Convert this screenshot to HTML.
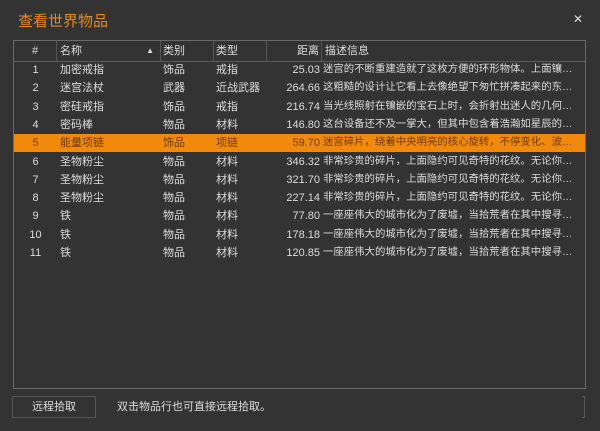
<!DOCTYPE html>
<html><head><meta charset="utf-8"><style>
body{margin:0;width:600px;height:431px;background:#333;font-family:"Liberation Sans","Noto Sans CJK SC",sans-serif;color:#ddd;font-size:11px;overflow:hidden;position:relative}
.title{position:absolute;left:18px;top:10px;font-size:15px;color:#e8891b}
.x{position:absolute;left:573px;top:12px;font-size:12px;color:#ddd}
.tbl{position:absolute;left:13px;top:40px;width:573px;height:349px;border:1px solid #6a6a6a;box-sizing:border-box}
.hdr{position:absolute;left:0;top:0;width:100%;height:20px;border-bottom:1px solid #5a5a5a;background:#333}
.c{position:absolute;white-space:nowrap;overflow:hidden;line-height:18px}
.hdr .c{line-height:20px;border-right:1px solid #555;height:20px;box-sizing:border-box}
.row{position:absolute;left:0;width:100%;height:18.3px}
.sel{background:#f0890c;color:#6b3a00}
.d{font-size:10.4px;text-overflow:ellipsis}
.btn{position:absolute;left:12px;top:396px;width:84px;height:22px;border:1px solid #555;box-sizing:border-box;text-align:center;line-height:20px}
.msg{position:absolute;left:117px;top:396px;line-height:22px}
.br{position:absolute;left:582px;top:396px;width:3px;height:22px;border:1px solid #555;border-left:none;box-sizing:border-box}
</style></head><body>
<div class="title">查看世界物品</div>
<div class="x">✕</div>
<div class="tbl">
<div class="hdr">
<div class="c" style="left:0;width:43px;text-align:center">#</div>
<div class="c" style="left:43px;width:104px;padding-left:3px">名称<span style="position:absolute;right:6px;font-size:8px">▲</span></div>
<div class="c" style="left:147px;width:53px;padding-left:2px">类别</div>
<div class="c" style="left:200px;width:53px;padding-left:2px">类型</div>
<div class="c" style="left:253px;width:55px;text-align:right;padding-right:2px">距离</div>
<div class="c" style="left:308px;width:264px;padding-left:3px;border:none">描述信息</div>
</div>
<div id="rows"></div>
</div>
<div class="btn">远程拾取</div>
<div class="msg">双击物品行也可直接远程拾取。</div>
<div class="br"></div>
<script>
var d=[["1","加密戒指","饰品","戒指","25.03","迷宫的不断重建造就了这枚方便的环形物体。上面镶嵌着各种东西"],
["2","迷宫法杖","武器","近战武器","264.66","这粗糙的设计让它看上去像绝望下匆忙拼凑起来的东西啊啊"],
["3","密硅戒指","饰品","戒指","216.74","当光线照射在镶嵌的宝石上时，会折射出迷人的几何图案来"],
["4","密码棒","物品","材料","146.80","这台设备还不及一掌大，但其中包含着浩瀚如星辰的知识"],
["5","能量项链","饰品","项链","59.70","迷宫碎片，绕着中央明亮的核心旋转，不停变化、波动着"],
["6","圣物粉尘","物品","材料","346.32","非常珍贵的碎片，上面隐约可见奇特的花纹。无论你的手"],
["7","圣物粉尘","物品","材料","321.70","非常珍贵的碎片，上面隐约可见奇特的花纹。无论你的手"],
["8","圣物粉尘","物品","材料","227.14","非常珍贵的碎片，上面隐约可见奇特的花纹。无论你的手"],
["9","铁","物品","材料","77.80","一座座伟大的城市化为了废墟，当拾荒者在其中搜寻时会"],
["10","铁","物品","材料","178.18","一座座伟大的城市化为了废墟，当拾荒者在其中搜寻时会"],
["11","铁","物品","材料","120.85","一座座伟大的城市化为了废墟，当拾荒者在其中搜寻时会"]];
var h="";d.forEach(function(r,i){h+='<div class="row'+(i==4?' sel':'')+'" style="top:'+(20+i*18.3)+'px">'+
'<div class="c" style="left:0;width:43px;text-align:center">'+r[0]+'</div>'+
'<div class="c" style="left:46px;width:100px">'+r[1]+'</div>'+
'<div class="c" style="left:149px;width:50px">'+r[2]+'</div>'+
'<div class="c" style="left:202px;width:50px">'+r[3]+'</div>'+
'<div class="c" style="left:253px;width:53px;text-align:right">'+r[4]+'</div>'+
'<div class="c d" style="left:309px;width:259px">'+r[5]+'</div></div>';});
document.getElementById("rows").innerHTML=h;
</script>
</body></html>
